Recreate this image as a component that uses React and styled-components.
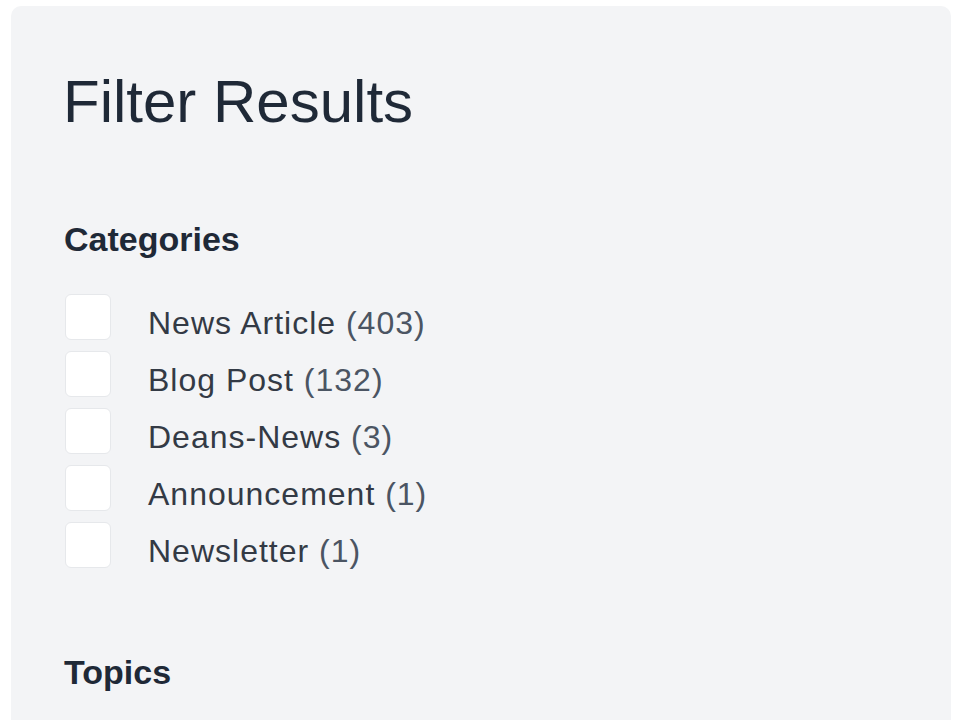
import React from "react";
import styled, { createGlobalStyle } from "styled-components";

const Global = createGlobalStyle`
  html, body { margin: 0; padding: 0; background: #ffffff; }
  body { font-family: "Liberation Sans", Arial, sans-serif; }
`;

const Page = styled.div`
  padding: 6px 9px 0 11px;
  height: 720px;
  box-sizing: border-box;
  overflow: hidden;
`;

const Panel = styled.aside`
  background: #f3f4f6;
  border-radius: 10px;
  padding: 66px 54px 40px 54px;
  min-height: 800px;
  box-sizing: border-box;
`;

const Title = styled.h2`
  margin: 0 0 0 -2px;
  font-size: 60px;
  line-height: 1;
  font-weight: 400;
  color: #1f2937;
`;

const SectionTitle = styled.h3`
  margin: ${(p) => p.$top}px 0 0 -1px;
  font-size: 34px;
  line-height: 1;
  font-weight: 700;
  color: #1f2937;
`;

const List = styled.ul`
  list-style: none;
  margin: 32px 0 0 0;
  padding: 0;
`;

const Row = styled.li`
  display: flex;
  align-items: flex-start;
  height: 57px;
`;

const Box = styled.span`
  flex: none;
  width: 46px;
  height: 46px;
  margin-top: 6px;
  box-sizing: border-box;
  background: #ffffff;
  border: 1px solid #e6e8eb;
  border-radius: 6px;
`;

const Label = styled.span`
  margin: 19px 0 0 37px;
  font-size: 32px;
  line-height: 1;
  letter-spacing: 1px;
  color: #333a45;
`;

const Count = styled.span`
  color: #4b5563;
`;

const categories = [
  ["News Article", 403],
  ["Blog Post", 132],
  ["Deans-News", 3],
  ["Announcement", 1],
  ["Newsletter", 1],
];

export default function App() {
  return (
    <>
      <Global />
      <Page>
        <Panel>
          <Title>Filter Results</Title>
          <SectionTitle $top={90}>Categories</SectionTitle>
          <List>
            {categories.map(([name, n]) => (
              <Row key={name}>
                <Box role="checkbox" aria-checked="false" />
                <Label>
                  {name} <Count>({n})</Count>
                </Label>
              </Row>
            ))}
          </List>
          <SectionTitle $top={82}>Topics</SectionTitle>
        </Panel>
      </Page>
    </>
  );
}
